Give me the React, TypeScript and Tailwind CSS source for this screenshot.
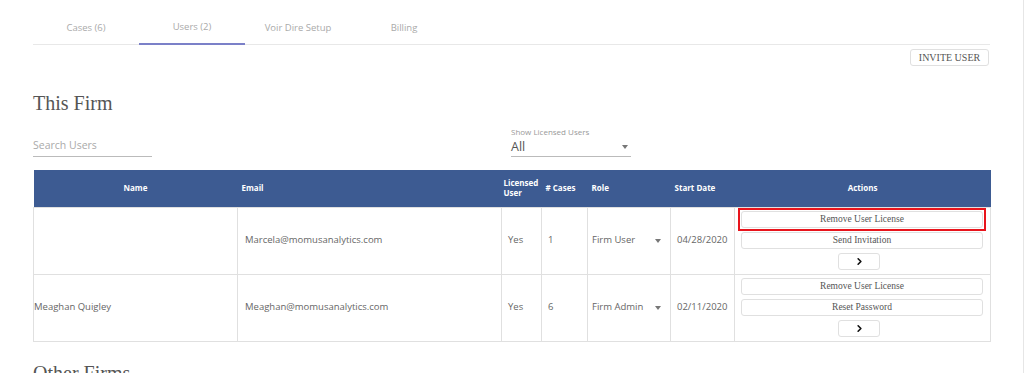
import React from "react";
import { ChevronRight } from "lucide-react";

const tabs = [
  { name: "Cases (6)", active: false },
  { name: "Users (2)", active: true },
  { name: "Voir Dire Setup", active: false },
  { name: "Billing", active: false },
];

type User = {
  name: string;
  email: string;
  licensed: string;
  cases: string;
  role: string;
  start: string;
  second: string;
  highlight?: boolean;
};

const users: User[] = [
  {
    name: "",
    email: "Marcela@momusanalytics.com",
    licensed: "Yes",
    cases: "1",
    role: "Firm User",
    start: "04/28/2020",
    second: "Send Invitation",
    highlight: true,
  },
  {
    name: "Meaghan Quigley",
    email: "Meaghan@momusanalytics.com",
    licensed: "Yes",
    cases: "6",
    role: "Firm Admin",
    start: "02/11/2020",
    second: "Reset Password",
  },
];

const sans = "font-['Open_Sans','Liberation_Sans',sans-serif]";
const serif = "font-['Liberation_Serif','Times_New_Roman',serif]";

function ActionButton({ label }: { label: string }) {
  return (
    <button
      className={`${serif} block w-full h-[17px] rounded-[3px] border border-[#e0e0e0] bg-white text-[9.5px] leading-none text-[#555]`}
    >
      {label}
    </button>
  );
}

export default function App() {
  return (
    <div className={`${sans} h-[373px] w-[1024px] overflow-hidden bg-white border-r border-[#e6e6e6]`}>
      <div className="pl-[33px] pr-[33px]">
        {/* Tabs */}
        <nav className="flex h-[45px] border-b border-[#e8e8e8]">
          {tabs.map((tab) => (
            <div
              key={tab.name}
              className={`w-[106px] flex items-end justify-center pb-[9px] text-[9.5px] text-[#aaa] ${
                tab.active ? "border-b-2 border-[#7b80c8] -mb-px" : ""
              }`}
            >
              {tab.name}
            </div>
          ))}
        </nav>

        <div className="flex justify-end pt-[4px]">
          <button
            className={`${serif} h-[17px] w-[79px] mr-[1px] rounded-[3px] border border-[#e0e0e0] text-[10px] leading-none text-[#555]`}
          >
            INVITE USER
          </button>
        </div>

        <h2 className={`${serif} mt-[25px] text-[20px] leading-[24px] text-[#555]`}>This Firm</h2>

        {/* Filters */}
        <div className="flex items-end mt-[11px]">
          <div className="w-[119px] border-b border-[#bbb] pb-[3px] text-[10.5px] leading-[16px] text-[#aaa]">
            Search Users
          </div>
          <div className="ml-[359px] w-[120px]">
            <div className="text-[8px] leading-[12px] text-[#999]">Show Licensed Users</div>
            <div className="flex items-center justify-between border-b border-[#bbb] pb-[1px]">
              <span className="text-[12.5px] leading-[17px] text-[#555]">All</span>
              <span className="mr-[3px] h-0 w-0 border-x-[3.5px] border-t-[4px] border-x-transparent border-t-[#777]" />
            </div>
          </div>
        </div>

        {/* Table */}
        <table className="mt-[13px] w-[957px] table-fixed border-collapse">
          <colgroup>
            <col className="w-[204px]" />
            <col className="w-[264px]" />
            <col className="w-[40px]" />
            <col className="w-[46px]" />
            <col className="w-[83px]" />
            <col className="w-[64px]" />
            <col className="w-[256px]" />
          </colgroup>
          <thead>
            <tr className="h-[37px] bg-[#3d5b92] text-[8px] font-bold text-white leading-[10px]">
              <th className="text-center">Name</th>
              <th className="text-left pl-[4px]">Email</th>
              <th className="text-left pl-[2px]">
                Licensed
                <br />
                User
              </th>
              <th className="text-left pl-[4px]">#&nbsp;Cases</th>
              <th className="text-left pl-[4px]">Role</th>
              <th className="text-left pl-[4px]">Start Date</th>
              <th className="text-center">Actions</th>
            </tr>
          </thead>
          <tbody className="text-[9.5px] text-[#666]">
            {users.map((u) => (
              <tr key={u.email} className="h-[67px]">
                <td className="border border-[#e0e0e0] pl-0">{u.name}</td>
                <td className="border border-[#e0e0e0] pl-[7px]">{u.email}</td>
                <td className="border border-[#e0e0e0] pl-[6px]">{u.licensed}</td>
                <td className="border border-[#e0e0e0] pl-[6px]">{u.cases}</td>
                <td className="border border-[#e0e0e0] pl-[4px]">
                  <div className="flex items-center justify-between pr-[9px]">
                    <span>{u.role}</span>
                    <span className="h-0 w-0 border-x-[3.5px] border-t-[4px] border-x-transparent border-t-[#777]" />
                  </div>
                </td>
                <td className="border border-[#e0e0e0] pl-[6px]">{u.start}</td>
                <td className="border border-[#e0e0e0] pl-[6px] pr-[7px]">
                  <div className="flex flex-col gap-[4px]">
                    <div className="relative">
                      <ActionButton label="Remove User License" />
                      {u.highlight && (
                        <span className="pointer-events-none absolute -inset-x-[3px] -inset-y-[3px] border-2 border-[#e8141c]" />
                      )}
                    </div>
                    <ActionButton label={u.second} />
                    <button className="ml-[97px] flex h-[17px] w-[42px] items-center justify-center rounded-[3px] border border-[#e0e0e0] bg-white">
                      <ChevronRight size={11} strokeWidth={3.5} color="#111" />
                    </button>
                  </div>
                </td>
              </tr>
            ))}
          </tbody>
        </table>

        <h2 className={`${serif} mt-[19px] text-[20px] leading-[24px] text-[#555]`}>Other Firms</h2>
      </div>
    </div>
  );
}
